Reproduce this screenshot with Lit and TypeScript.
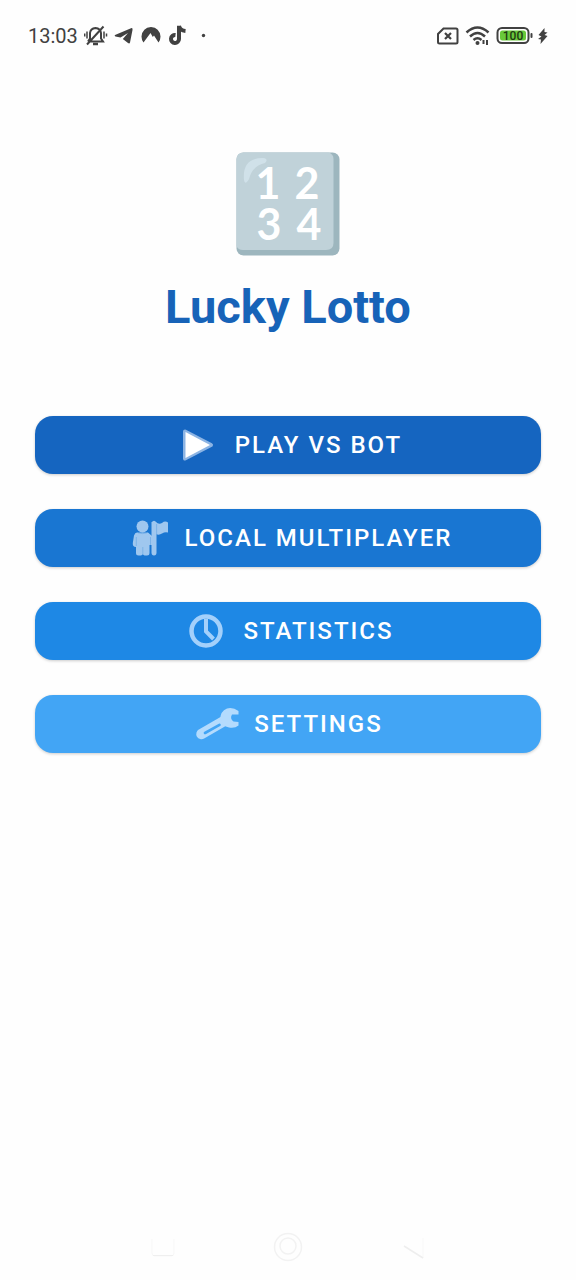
import { LitElement, html, css, svg } from 'lit';
import { customElement } from 'lit/decorators.js';

const playIcon = svg`
  <path d="M11 10.5 L37 24 L11 37.5 Z" fill="#8cb4e4" stroke="#8cb4e4" stroke-width="4" stroke-linejoin="round"/>
  <path d="M11.500 11 L36 24 L11.500 37 Z" fill="#fff"/>`;

const playersIcon = svg`
  <g fill="currentColor">
    <circle cx="18.500" cy="12.500" r="6"/>
    <path d="M13 18.500 H24 L28 22 V31 H25.500 V39 Q25.500 41.500 23 41.500 H20.500 L18.800 40.500 L17 41.500 H14.500 Q12 41.500 12 39 V33 Q8.500 33 8.800 29 L10 21.500 Q11 18.500 13 18.500 Z"/>
    <path d="M27.500 8.500 Q30 5 32.500 8.500 V38.500 Q32.500 41.500 30 41.500 Q27.500 41.500 27.500 38.500 Z"/>
    <path d="M32 8.500 Q35 10.500 38 9 Q41 6.500 44 8.500 V18.500 Q41 17.500 38 19.500 Q35 21.500 32 20 Z"/>
  </g>
  <path d="M12.300 23 V32 M18.800 33 V41 M26.500 23 V40 M32.600 10 V20 M14 18.800 Q18.500 20.500 23 18.800" stroke="#1976d2" stroke-opacity=".25" fill="none"/>`;

const clockIcon = svg`
  <circle cx="24" cy="24" r="14.500" fill="none" stroke="currentColor" stroke-width="4.500"/>
  <path d="M24 12 V24.500 L31.500 32" fill="none" stroke="currentColor" stroke-width="4"/>`;

const wrenchIcon = svg`
  <path d="M8.500 34 L31 21" stroke="currentColor" stroke-width="10.500" stroke-linecap="round"/>
  <path d="M45.500 11 Q40 7 34 8.500 Q27 11.500 27.500 19 Q29 26.500 36 27.500 Q42 28.500 45.500 25.500 V22 L40.500 21.500 Q36.500 18.500 39 14.500 L45.500 14.500 Z" fill="currentColor"/>
  <path d="M12 33 L26.500 24.800" stroke="#42a5f5" stroke-width="2.600" stroke-linecap="round"/>`;

const menu = [
  { label: 'PLAY VS BOT', tone: 'play', icon: playIcon },
  { label: 'LOCAL MULTIPLAYER', tone: 'local', icon: playersIcon },
  { label: 'STATISTICS', tone: 'stats', icon: clockIcon },
  { label: 'SETTINGS', tone: 'settings', icon: wrenchIcon },
];

@customElement('app-root')
export class AppRoot extends LitElement {
  static styles = css`
    :host {
      display: flex;
      flex-direction: column;
      min-height: 100vh;
      background: #fefefe;
      font-family: Roboto, sans-serif;
    }
    svg { display: block; flex: none; }
    .status {
      display: flex;
      justify-content: space-between;
      align-items: center;
      height: 72px;
      padding: 0 28px;
      color: #414141;
    }
    .group { display: flex; align-items: center; }
    .left { gap: 6px; }
    .right { gap: 5px; }
    .time { font-size: 20px; line-height: 24px; }
    main {
      flex: 1;
      display: flex;
      flex-direction: column;
      align-items: center;
      padding: 80px 35px 0;
    }
    h1 {
      margin: 23px 0 0;
      font-size: 47px;
      line-height: 56px;
      font-weight: 700;
      color: #1763b8;
    }
    .digit { font: 700 43px Lato, sans-serif; }
    .level { font: 500 12px Roboto, sans-serif; }
    .menu {
      align-self: stretch;
      display: flex;
      flex-direction: column;
      gap: 35px;
      margin-top: 81px;
    }
    .item {
      display: flex;
      align-items: center;
      justify-content: center;
      gap: 13px;
      height: 58px;
      padding: 0 16px;
      border: 0;
      border-radius: 18px;
      color: #fff;
      font: 500 24px/28px Roboto, sans-serif;
      letter-spacing: 2px;
      box-shadow: 0 1px 3px rgba(0, 0, 0, .2);
      cursor: pointer;
    }
    .play { background: #1565c0; }
    .local { background: #1976d2; }
    .stats { background: #1e88e5; }
    .settings { background: #42a5f5; }
    .local svg { color: #9fc7ef; }
    .stats svg { color: #a3d0fb; }
    .settings svg { color: #b4dbfd; }
    .nav {
      display: flex;
      justify-content: center;
      align-items: center;
      gap: 89px;
      height: 66px;
    }
    .key { padding: 0; border: 0; background: none; }
  `;

  render() {
    return html`
      <header class="status">
        <div class="group left">
          <span class="time">13:03</span>
          <svg width="24" height="24" viewBox="0 0 24 24" fill="none" stroke="currentColor" stroke-width="2">
            <path d="M4 17.500 H19 L17 14.500 V9 Q16.500 4.500 11.500 4 Q6.500 4.500 6 9 V14.500 L4 17.500 M3 20.500 L19.500 2.500"/>
            <path d="M9 20 H14" stroke-width="2.500"/>
            <path d="M3 7.500 V14.500 M.700 9.500 V12.500 M20 7.500 V14.500 M22.500 9.500 V12.500" stroke-width="1.500"/>
          </svg>
          <svg width="20" height="20" viewBox="0 0 20 20" fill="currentColor">
            <path d="M1 9 L17 2.200 Q19 1.700 18.500 4 L16 16.500 Q15.500 18 14 17 L8.800 13 L14 7 L6.500 11.500 L1.500 10.500 Q0 9.800 1 9 Z"/>
          </svg>
          <svg width="22" height="20" viewBox="0 0 22 20" fill="currentColor">
            <path d="M3.500 16.500 Q1.500 14 1.500 10.500 Q2.500 1.500 11 1 Q19.500 1.500 20.500 10.500 Q20.500 14 18.500 16.500 L14 9.500 L12.800 11 L10.500 7 L3.500 16.500 Z"/>
          </svg>
          <svg width="20" height="22" viewBox="0 0 20 22" fill="none" stroke="currentColor" stroke-width="4">
            <path d="M11 .800 V14 A4 4 0 1 1 7.500 10 M11 .800 Q12 5.500 17.500 6"/>
          </svg>
          <svg width="16" height="20" viewBox="0 0 16 20" fill="currentColor"><circle cx="9.500" cy="9.500" r="1.700"/></svg>
        </div>
        <div class="group right">
          <svg width="24" height="20" viewBox="0 0 24 20" fill="none" stroke="currentColor" stroke-width="2">
            <path d="M7.500 2.500 H20 Q21.500 2.500 21.500 4 V16 Q21.500 17.500 20 17.500 H3.500 Q2 17.500 2 16 V8 Z"/>
            <path d="M9 7 L15 13 M15 7 L9 13" stroke-width="2.200"/>
          </svg>
          <svg width="26" height="22" viewBox="0 0 26 22" fill="none" stroke="currentColor" stroke-width="2.500">
            <path d="M1.500 7.500 Q12.500 -2.500 23.500 7.500 M5 11.500 Q12.500 4.500 20 11.500 M8.500 15 Q12.500 11.500 16.500 15"/>
            <circle cx="12.500" cy="18" r="2" fill="currentColor" stroke="none"/>
            <path d="M18.500 15 V19 M22 15 V20" stroke-width="2"/>
          </svg>
          <svg width="37" height="20" viewBox="0 0 37 20">
            <rect x="1.500" y="2" width="31" height="15" rx="4.500" fill="#fefefe" stroke="#414141" stroke-width="2"/>
            <rect x="4" y="4.500" width="26" height="10" rx="2.500" fill="#69c93a"/>
            <rect x="34.500" y="7" width="2" height="5" rx="1" fill="#414141"/>
            <text class="level" x="17" y="14" text-anchor="middle" fill="#1f3b12">100</text>
          </svg>
          <svg width="10" height="20" viewBox="0 0 10 20" fill="currentColor">
            <path d="M6.500 2 L.500 9 L3.500 10.500 L0 13 L3 13.500 L2.500 18 L9.500 10 L6.500 9 L9.500 6.500 L6.500 6 Z"/>
          </svg>
        </div>
      </header>
      <main>
        <svg width="104" height="104" viewBox="0 0 104 104" role="img" aria-label="Numbers">
          <rect x=".500" y=".500" width="103" height="103" rx="7" fill="#9db6be"/>
          <path d="M7.500 .500 H92 Q97.500 1.500 97.500 7 V91 Q97.500 98 90 98 H7 Q2 98 .500 94 V7.500 Q.500 .500 7.500 .500 Z" fill="#c0d2d9"/>
          <path d="M8 28 Q6 6 27 6 Q33 7 29 11 Q16 14 13 27 Q9 34 8 28 Z" fill="#d0e1e9"/>
          <text class="digit" fill="#fff" text-anchor="middle">
            <tspan x="32" y="47">1</tspan><tspan x="71" y="47">2</tspan><tspan x="33" y="88">3</tspan><tspan x="73" y="88">4</tspan>
          </text>
        </svg>
        <h1>Lucky Lotto</h1>
        <nav class="menu">
          ${menu.map(m => html`
            <button class="item ${m.tone}">
              <svg width="48" height="48" viewBox="0 0 48 48" aria-hidden="true">${m.icon}</svg>
              <span>${m.label}</span>
            </button>`)}
        </nav>
      </main>
      <footer class="nav">
        <button class="key" aria-label="Recent apps">
          <svg width="36" height="36" viewBox="0 0 36 36" fill="none" stroke="#f7f7f7" stroke-width="1">
            <path d="M7 10 V24 Q7 27 10 27 H26 Q29 27 29 24 V10"/>
            <path d="M8 26.500 H28" stroke="#efefef"/>
          </svg>
        </button>
        <button class="key" aria-label="Home">
          <svg width="36" height="36" viewBox="0 0 36 36" fill="none" stroke="#f2f2f2" stroke-width="1.500">
            <circle cx="18" cy="18" r="13.500"/><circle cx="18" cy="17" r="8"/>
          </svg>
        </button>
        <button class="key" aria-label="Back">
          <svg width="36" height="36" viewBox="0 0 36 36" fill="none" stroke="#f8f8f8" stroke-width="1">
            <path d="M28 9 V29"/><path d="M9 17 L28 29" stroke="#eee" stroke-width="1.500"/>
          </svg>
        </button>
      </footer>
    `;
  }
}
